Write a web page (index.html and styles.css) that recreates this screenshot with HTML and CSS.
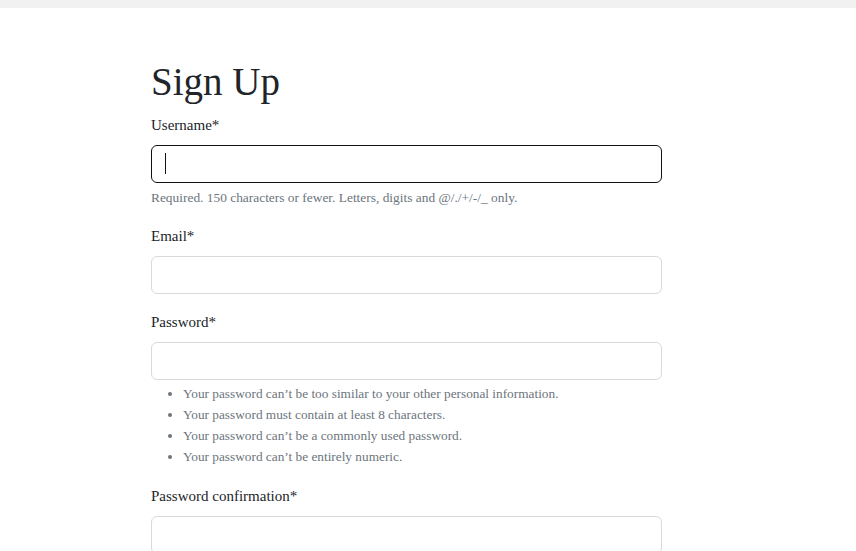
FILE: index.html
```html
<!DOCTYPE html>
<html lang="en">
<head>
<meta charset="utf-8">
<title>Sign Up</title>
<link rel="stylesheet" href="styles.css">
</head>
<body>
<div class="topbar"></div>
<main class="page">
  <h1 class="title">Sign Up</h1>
  <form class="form">
    <div class="field">
      <label class="label" for="username">Username*</label>
      <div class="control-wrap">
        <input class="control is-focused" id="username" type="text">
        <span class="caret"></span>
      </div>
      <div class="help">Required. 150 characters or fewer. Letters, digits and @/./+/-/_ only.</div>
    </div>
    <div class="field">
      <label class="label" for="email">Email*</label>
      <input class="control" id="email" type="email">
    </div>
    <div class="field">
      <label class="label" for="password1">Password*</label>
      <input class="control" id="password1" type="password">
      <ul class="help-list">
        <li>Your password can’t be too similar to your other personal information.</li>
        <li>Your password must contain at least 8 characters.</li>
        <li>Your password can’t be a commonly used password.</li>
        <li>Your password can’t be entirely numeric.</li>
      </ul>
    </div>
    <div class="field">
      <label class="label" for="password2">Password confirmation*</label>
      <input class="control" id="password2" type="password">
    </div>
  </form>
</main>
</body>
</html>
```
FILE: styles.css
```css
html, body {
  margin: 0;
  padding: 0;
  background: #ffffff;
}
body {
  font-family: "Liberation Serif", "Times New Roman", serif;
  color: #212529;
  font-size: 15px;
  line-height: 24px;
}
.topbar {
  height: 8px;
  background: #f1f1f1;
}
.page {
  width: 511px;
  padding: 50px 0 0 151px;
}
.title {
  margin: 0 0 8px;
  font-size: 39px;
  font-weight: 400;
  line-height: 47px;
}
.form {
  display: flex;
  flex-direction: column;
}
.field {
  display: flex;
  flex-direction: column;
  margin-bottom: 16px;
}
.label {
  display: block;
  margin-bottom: 8px;
}
.control-wrap {
  position: relative;
}
.control {
  display: block;
  box-sizing: border-box;
  width: 100%;
  height: 38px;
  margin: 0;
  padding: 6px 12px;
  font: inherit;
  color: #212529;
  background: #fff;
  border: 1px solid #d7dadd;
  border-radius: 6px;
  outline: none;
}
.control.is-focused {
  border: 1.5px solid #111;
}
.caret {
  position: absolute;
  left: 14px;
  top: 8px;
  width: 1px;
  height: 21px;
  background: #111;
}
.help {
  margin-top: 4px;
  font-size: 13.4px;
  line-height: 21px;
  color: #6c757d;
}
.help-list {
  margin: 3px 0 1px;
  padding-left: 32px;
  font-size: 13.3px;
  line-height: 21px;
  color: #6c757d;
}
```
